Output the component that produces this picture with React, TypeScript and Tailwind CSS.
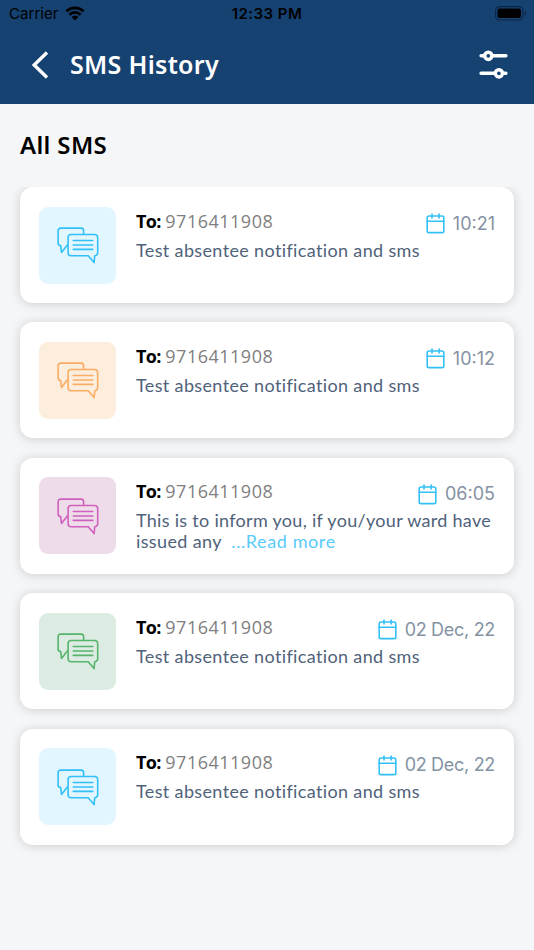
type Message = {
  id: number;
  to: string;
  text: string;
  date: string;
  tile: string;
  truncated?: boolean;
};

const messages: Message[] = [
  { id: 1, to: "9716411908", text: "Test absentee notification and sms", date: "10:21", tile: "bg-[#e2f6ff] text-[#33c0f7]" },
  { id: 2, to: "9716411908", text: "Test absentee notification and sms", date: "10:12", tile: "bg-[#fdeddc] text-[#f9ad62]" },
  { id: 3, to: "9716411908", text: "This is to inform you, if you/your ward have issued any", date: "06:05", tile: "bg-[#eedceb] text-[#d05fbd]", truncated: true },
  { id: 4, to: "9716411908", text: "Test absentee notification and sms", date: "02 Dec, 22", tile: "bg-[#dcece2] text-[#56b46c]" },
  { id: 5, to: "9716411908", text: "Test absentee notification and sms", date: "02 Dec, 22", tile: "bg-[#e2f6ff] text-[#33c0f7]" },
];

function ChatIcon() {
  return (
    <svg width="42" height="37" viewBox="0 0 42 37" fill="none" stroke="currentColor" strokeWidth="1.6" strokeLinecap="round" strokeLinejoin="round">
      <path d="M26.6 7V3.7a2.6 2.6 0 0 0-2.6-2.6H3.7a2.6 2.6 0 0 0-2.6 2.6v12.2a2.6 2.6 0 0 0 2.6 2.6l.8 6.9 5.8-7.3" />
      <path d="M14.1 7.5h23.6a3 3 0 0 1 3 3v15.2a3 3 0 0 1-3 3l-.6 6.9-5.9-6.9H14.1a3 3 0 0 1-3-3V10.5a3 3 0 0 1 3-3Z" />
      <path d="M16.3 13.5h19.5M16.3 18h19.5M16.3 22.4h19.5" />
    </svg>
  );
}

function CalendarIcon() {
  return (
    <svg className="shrink-0" width="20" height="21" viewBox="0 0 20 21" fill="none" stroke="#33c0f7" strokeWidth="1.6" strokeLinecap="round">
      <rect x="1.2" y="3" width="16.6" height="16.6" rx="1.7" />
      <path d="M1.2 8.3h16.6M6 1v4M13.1 1v4" />
    </svg>
  );
}

function StatusBar() {
  return (
    <div className="grid h-[27px] grid-cols-3 items-center pl-[9px] pr-[7px] pt-px font-['Inter',sans-serif] text-[15px] text-black">
      <div className="flex items-center gap-[6px]">
        <span className="tracking-[0.05px]">Carrier</span>
        <svg className="-mt-[2px]" width="20" height="15" viewBox="0 0 20 15" fill="none" stroke="currentColor" strokeWidth="2.7">
          <path d="M1.3 5.3a12.6 12.6 0 0 1 17.4 0M4.4 8.7a8.1 8.1 0 0 1 11.2 0" />
          <path d="M6.6 11.1a5 5 0 0 1 6.8 0L10 14.5Z" fill="currentColor" stroke="none" />
        </svg>
      </div>
      <span className="-ml-[2px] text-center font-semibold tracking-[0.45px]">12:33 PM</span>
      <svg className="-mt-px justify-self-end" width="32" height="15" viewBox="0 0 32 15" fill="none">
        <rect x=".6" y=".6" width="27.4" height="13.4" rx="4" stroke="#0c2443" strokeWidth="1.1" />
        <rect x="2.5" y="2.5" width="23.5" height="9.6" rx="2.3" fill="#000" />
        <path d="M29.7 5c2 .9 2 3.9 0 4.8Z" fill="#0c2443" />
      </svg>
    </div>
  );
}

function SmsCard({ message }: { message: Message }) {
  return (
    <li className="flex h-[116px] shrink-0 gap-[20px] rounded-[13px] bg-white pl-[19px] pr-[19px] pt-[19.5px] shadow-[0_1px_11px_rgba(0,0,0,0.17)]">
      <div className={`flex size-[77px] shrink-0 items-center justify-center rounded-[9px] pt-px ${message.tile}`}>
        <ChatIcon />
      </div>
      <div className="min-w-0 flex-1">
        <div className="flex justify-between">
          <p className="whitespace-nowrap pt-px font-['Open_Sans',sans-serif] text-[18px] leading-[26px] text-[#808080]">
            <span className="font-bold tracking-[-0.7px] text-black">To:</span>{" "}
            <span className="tracking-[0.5px]">{message.to}</span>
          </p>
          <div className="flex items-center gap-[7px] pt-[5px] font-['Inter',sans-serif] text-[18px] leading-[24px] text-[#8592a3]">
            <CalendarIcon />
            <span className={`whitespace-nowrap ${message.date.length > 5 ? "tracking-[-0.3px]" : "tracking-normal"}`}>{message.date}</span>
          </div>
        </div>
        <p className="mt-[4px] whitespace-nowrap font-['Lato',sans-serif] text-[18px] leading-[21px] tracking-[0.36px] text-[#50627a]">
          {message.truncated ? (
            <>
              <span className="tracking-[0.3px]">This is to inform you, if you/your ward have</span>
              <br />
              issued any &nbsp;<button className="tracking-[0.6px] text-[#58cbf9]">...Read more</button>
            </>
          ) : (
            message.text
          )}
        </p>
      </div>
    </li>
  );
}

export default function App() {
  return (
    <div className="min-h-[950px] w-full overflow-hidden bg-[#f5f6f8]">
      <header className="h-[103.5px] bg-[#164272]">
        <StatusBar />
        <div className="flex h-[75px] items-center pl-[31px] pr-[26px]">
          <button aria-label="Back">
            <svg width="18" height="28" viewBox="0 0 18 28" fill="none" stroke="#fff" strokeWidth="3.4">
              <path d="M16 1.5 3.2 14 16 26.5" />
            </svg>
          </button>
          <h1 className="-mt-px ml-[21px] font-['Noto_Sans',sans-serif] text-[25px] font-semibold leading-[34px] tracking-[0.3px] text-white">SMS History</h1>
          <button aria-label="Filter" className="ml-auto">
            <svg width="29" height="29" viewBox="0 0 29 29" fill="none" stroke="#fff" strokeWidth="3.5" strokeLinecap="round">
              <path d="M2.1 5.8h2.4M13.5 5.8h13.4M2.1 23.3h12.5M24 23.3h2.9" />
              <circle cx="9.3" cy="5.8" r="3.6" />
              <circle cx="19.9" cy="23.3" r="3.6" />
            </svg>
          </button>
        </div>
      </header>
      <main>
        <h2 className="px-[20px] pt-[24.5px] font-['Noto_Sans',sans-serif] text-[24px] font-semibold leading-[34px] tracking-[0.35px] text-black">All SMS</h2>
        <ul className="mt-[25px] flex h-[763px] flex-col gap-[19.4px] overflow-hidden pl-[20px] pr-[20px]">
          {messages.map((message) => (
            <SmsCard key={message.id} message={message} />
          ))}
        </ul>
      </main>
    </div>
  );
}
